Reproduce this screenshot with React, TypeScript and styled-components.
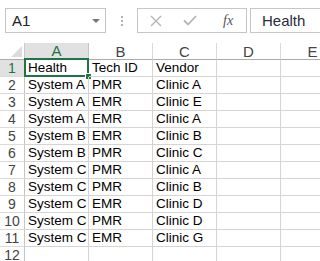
import React from "react";
import styled, { createGlobalStyle } from "styled-components";

const Global = createGlobalStyle`
  html, body { margin: 0; padding: 0; background: #ffffff; }
  body { font-family: "Liberation Sans", Arial, sans-serif; overflow: hidden; }
`;

const Page = styled.div`
  width: 320px;
  height: 261px;
  overflow: hidden;
  background: #ffffff;
`;

const Toolbar = styled.div`
  display: flex;
  align-items: center;
  height: 25px;
  margin-top: 8px;
  padding-left: 5px;
  white-space: nowrap;
`;

const NameBox = styled.div`
  box-sizing: border-box;
  width: 101px;
  height: 25px;
  border: 1px solid #c6c6c6;
  display: flex;
  align-items: center;
  justify-content: space-between;
  padding: 0 5px 0 6px;
  font-size: 15px;
  color: #222222;
  flex-shrink: 0;
`;

const Caret = styled.span`
  width: 0;
  height: 0;
  border-left: 4px solid transparent;
  border-right: 4px solid transparent;
  border-top: 4px solid #777777;
`;

const Grip = styled.div`
  width: 31px;
  display: flex;
  flex-direction: column;
  align-items: center;
  gap: 2px;
  flex-shrink: 0;
`;

const GripDot = styled.span`
  width: 2px;
  height: 2px;
  background: #b3b3b3;
`;

const FuncBox = styled.div`
  box-sizing: border-box;
  width: 110px;
  height: 25px;
  border: 1px solid #c6c6c6;
  display: flex;
  align-items: center;
  padding-left: 12px;
  gap: 21px;
  flex-shrink: 0;
`;

const Fx = styled.span`
  font-family: "Liberation Serif", "Times New Roman", serif;
  font-style: italic;
  font-size: 14px;
  color: #555555;
  margin-left: 5px;
`;

const FormulaBox = styled.div`
  box-sizing: border-box;
  height: 25px;
  flex: 1 0 auto;
  margin-left: 3px;
  border: 1px solid #c6c6c6;
  border-right: none;
  display: flex;
  align-items: center;
  padding-left: 11px;
  font-size: 15px;
  color: #2b2b3b;
`;

const Sheet = styled.div`
  margin-top: 10px;
  display: grid;
  grid-template-columns: 25px repeat(5, 64px);
  grid-auto-rows: 17px;
  font-size: 13.5px;
  color: #000000;
`;

const Corner = styled.div`
  box-sizing: border-box;
  position: relative;
  background: #ffffff;
  border-right: 1px solid #c9c9c9;
  border-bottom: 1px solid #ababab;
  &::after {
    content: "";
    position: absolute;
    right: 2px;
    bottom: 2px;
    width: 0;
    height: 0;
    border-left: 11px solid transparent;
    border-bottom: 11px solid #dcdcdc;
  }
`;

const ColHead = styled.div<{ $active?: boolean }>`
  box-sizing: border-box;
  display: flex;
  align-items: center;
  justify-content: center;
  font-size: 15px;
  background: ${(p) => (p.$active ? "#e1e1e1" : "#ffffff")};
  color: ${(p) => (p.$active ? "#217346" : "#444444")};
  border-right: 1px solid ${(p) => (p.$active ? "#c6c6c6" : "#dadada")};
  border-bottom: ${(p) => (p.$active ? "2px solid #217346" : "1px solid #ababab")};
`;

const RowHead = styled.div<{ $active?: boolean }>`
  box-sizing: border-box;
  display: flex;
  align-items: center;
  justify-content: center;
  font-size: 14px;
  background: ${(p) => (p.$active ? "#e1e1e1" : "#ffffff")};
  color: ${(p) => (p.$active ? "#217346" : "#444444")};
  border-right: 1px solid #c6c6c6;
  border-bottom: 1px solid #dadada;
`;

const Cell = styled.div`
  box-sizing: border-box;
  position: relative;
  border-right: 1px solid #d4d4d4;
  border-bottom: 1px solid #d4d4d4;
  padding: 0 0 0 3px;
  line-height: 16px;
  white-space: nowrap;
  overflow: visible;
`;

const Selection = styled.div`
  position: absolute;
  left: -1px;
  top: -2px;
  right: -1px;
  bottom: -1px;
  border: 2px solid #217346;
  pointer-events: none;
  &::after {
    content: "";
    position: absolute;
    right: -4px;
    bottom: -4px;
    width: 5px;
    height: 5px;
    background: #217346;
    border-left: 1px solid #ffffff;
    border-top: 1px solid #ffffff;
  }
`;

const XIcon = () => (
  <svg width="12" height="12" viewBox="0 0 12 12">
    <path d="M1 1 L11 11 M11 1 L1 11" stroke="#b5b5b5" strokeWidth="1.4" fill="none" />
  </svg>
);

const CheckIcon = () => (
  <svg width="14" height="11" viewBox="0 0 14 11">
    <path d="M1 5.5 L5 9.5 L13 1" stroke="#b5b5b5" strokeWidth="1.8" fill="none" />
  </svg>
);

const columns = ["A", "B", "C", "D", "E"];

const data: string[][] = [
  ["Health", "Tech ID", "Vendor"],
  ["System A", "PMR", "Clinic A"],
  ["System A", "EMR", "Clinic E"],
  ["System A", "EMR", "Clinic A"],
  ["System B", "EMR", "Clinic B"],
  ["System B", "PMR", "Clinic C"],
  ["System C", "PMR", "Clinic A"],
  ["System C", "PMR", "Clinic B"],
  ["System C", "EMR", "Clinic D"],
  ["System C", "PMR", "Clinic D"],
  ["System C", "EMR", "Clinic G"],
  [],
];

export default function App() {
  return (
    <Page>
      <Global />
      <Toolbar>
        <NameBox>
          <span>A1</span>
          <Caret />
        </NameBox>
        <Grip>
          <GripDot />
          <GripDot />
          <GripDot />
        </Grip>
        <FuncBox>
          <XIcon />
          <CheckIcon />
          <Fx>fx</Fx>
        </FuncBox>
        <FormulaBox>Health</FormulaBox>
      </Toolbar>
      <Sheet>
        <Corner />
        {columns.map((c, i) => (
          <ColHead key={c} $active={i === 0}>
            {c}
          </ColHead>
        ))}
        {data.map((row, r) => (
          <React.Fragment key={r}>
            <RowHead $active={r === 0}>{r + 1}</RowHead>
            {columns.map((c, ci) => (
              <Cell key={c}>
                {row[ci] ?? ""}
                {r === 0 && ci === 0 && <Selection />}
              </Cell>
            ))}
          </React.Fragment>
        ))}
      </Sheet>
    </Page>
  );
}
